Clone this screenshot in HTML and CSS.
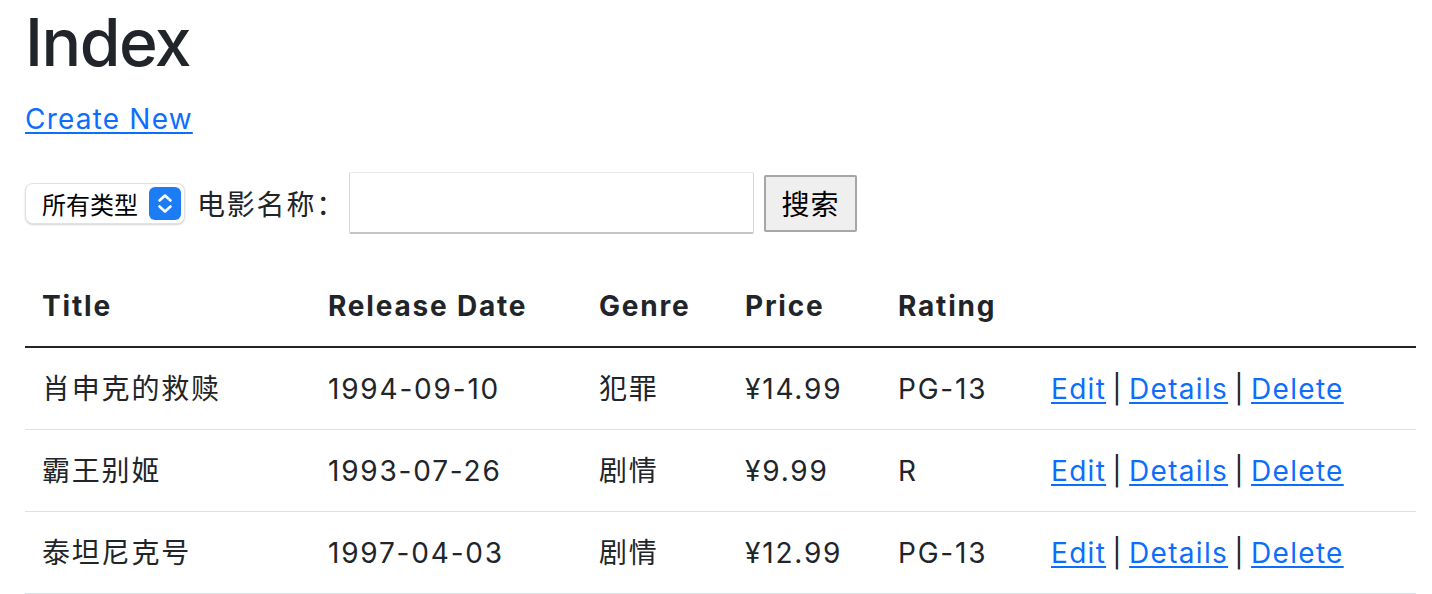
FILE: index.html
```html
<!DOCTYPE html>
<html lang="zh">
<head>
<meta charset="utf-8">
<title>Index</title>
<link rel="stylesheet" href="styles.css">
</head>
<body>
<main class="page">
  <h1 class="title">Index</h1>
  <p class="create"><a href="#">Create New</a></p>
  <form class="search">
    <div class="select-wrap">
      <select class="genre">
        <option>所有类型</option>
      </select>
      <svg class="chev" viewBox="0 0 32 33" width="32" height="33" aria-hidden="true">
        <rect x="0" y="0" width="32" height="33" rx="6" fill="#1b7cf4"/>
        <path d="M10.5 13.5 L16 8.5 L21.5 13.5" fill="none" stroke="#fff" stroke-width="2.6" stroke-linecap="round" stroke-linejoin="round"/>
        <path d="M10.5 19.5 L16 24.5 L21.5 19.5" fill="none" stroke="#fff" stroke-width="2.6" stroke-linecap="round" stroke-linejoin="round"/>
      </svg>
    </div>
    <label class="label">电影名称：</label>
    <input class="text" type="text">
    <button class="btn" type="button">搜索</button>
  </form>
  <table class="table">
    <colgroup>
      <col class="c1"><col class="c2"><col class="c3"><col class="c4"><col class="c5"><col class="c6">
    </colgroup>
    <thead>
      <tr><th>Title</th><th>Release Date</th><th>Genre</th><th>Price</th><th>Rating</th><th></th></tr>
    </thead>
    <tbody>
      <tr><td>肖申克的救赎</td><td>1994-09-10</td><td>犯罪</td><td>¥14.99</td><td>PG-13</td><td class="actions"><a href="#">Edit</a> | <a href="#">Details</a> | <a href="#">Delete</a></td></tr>
      <tr><td>霸王别姬</td><td>1993-07-26</td><td>剧情</td><td>¥9.99</td><td>R</td><td class="actions"><a href="#">Edit</a> | <a href="#">Details</a> | <a href="#">Delete</a></td></tr>
      <tr><td>泰坦尼克号</td><td>1997-04-03</td><td>剧情</td><td>¥12.99</td><td>PG-13</td><td class="actions"><a href="#">Edit</a> | <a href="#">Details</a> | <a href="#">Delete</a></td></tr>
    </tbody>
  </table>
</main>
</body>
</html>
```

FILE: styles.css
```css
html, body {
  margin: 0;
  padding: 0;
  background: #fff;
}
body {
  font-family: Inter, "Liberation Sans", "Noto Sans CJK SC", sans-serif;
  font-size: 28px;
  line-height: 42px;
  letter-spacing: 1.8px;
  color: #212529;
}
.page {
  padding: 0 16px 0 25px;
}
a {
  color: #0d6efd;
  text-decoration: underline;
  text-underline-offset: 3px;
  text-decoration-thickness: 2px;
}
.title {
  margin: 0 0 14px 0;
  font-size: 66px;
  line-height: 84px;
  font-weight: 500;
  letter-spacing: -1.5px;
}
.create {
  margin: 0 0 32px 0;
}
.create a {
  letter-spacing: 1.2px;
}
.search {
  display: flex;
  align-items: center;
  height: 62px;
  margin: 0 0 31px 0;
}
.select-wrap {
  position: relative;
  display: inline-flex;
  margin-right: 12px;
}
.genre {
  appearance: none;
  -webkit-appearance: none;
  width: 160px;
  height: 41px;
  padding: 0 0 0 16px;
  border: 1px solid #e2e2e2;
  border-radius: 8px;
  background: #fff;
  box-shadow: 0 1px 2px rgba(0,0,0,0.18);
  font-family: "Noto Sans CJK SC", sans-serif;
  font-size: 24px;
  letter-spacing: 0;
  color: #000;
}
.chev {
  position: absolute;
  right: 4px;
  top: 4px;
  pointer-events: none;
}
.label {
  font-family: "Noto Sans CJK SC", sans-serif;
  margin-right: 12px;
  width: 140px;
  white-space: nowrap;
}
.text {
  width: 405px;
  height: 62px;
  box-sizing: border-box;
  border: 1px solid #d6d6d6;
  border-top-color: #e8e8e8;
  border-bottom: 2px solid #c4c4c4;
  border-radius: 2px;
  margin: 0 10px 0 0;
  padding: 0 8px;
  font-size: 28px;
  background: #fff;
}
.btn {
  width: 93px;
  height: 57px;
  box-sizing: border-box;
  border: 2px solid #a6a6a6;
  border-radius: 2px;
  background: #efefef;
  font-family: "Noto Sans CJK SC", sans-serif;
  font-size: 28px;
  letter-spacing: 1px;
  color: #000;
  padding: 0;
}
.table {
  width: 1391px;
  border-collapse: collapse;
  table-layout: fixed;
}
.c1 { width: 286px; }
.c2 { width: 271px; }
.c3 { width: 146px; }
.c4 { width: 153px; }
.c5 { width: 153px; }
.c6 { width: 382px; }
th, td {
  text-align: left;
  padding: 20px 17px 19px 17px;
  vertical-align: middle;
  white-space: nowrap;
}
th {
  font-weight: 700;
  border-bottom: 2px solid #212529;
}
td {
  border-bottom: 1px solid #dee2e6;
}
.actions {
  letter-spacing: 1.3px;
  word-spacing: -3px;
}
```
